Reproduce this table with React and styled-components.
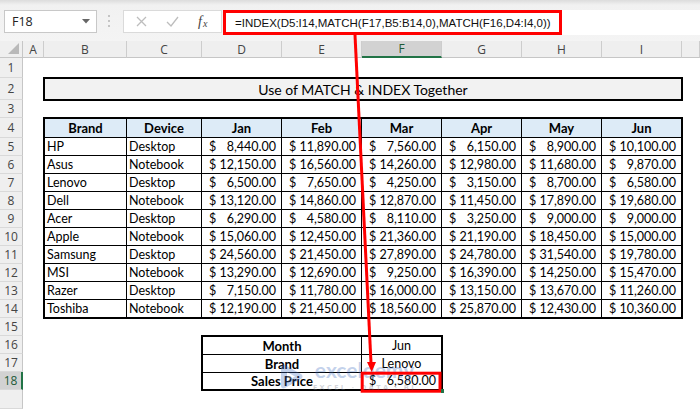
import React from 'react';
import styled, { createGlobalStyle } from 'styled-components';

const GlobalStyle = createGlobalStyle`
  html, body { margin: 0; padding: 0; background: #fff; }
  body { width: 700px; height: 409px; overflow: hidden; font-family: Lato, "Liberation Sans", sans-serif; }
  * { box-sizing: border-box; }
`;

const Screen = styled.div`
  position: relative;
  width: 700px;
  height: 409px;
  display: flex;
  flex-direction: column;
  overflow: hidden;
  background: #fff;
`;

/* ---------- formula bar ---------- */
const FormulaBar = styled.div`
  flex: none;
  height: 41px;
  display: flex;
  align-items: flex-start;
  padding: 10px 0 0 4px;
  background: linear-gradient(#dcdcdc 0, #f1f1f1 5px, #f4f4f4 100%);
`;

const NameBox = styled.div`
  width: 93px;
  height: 23px;
  border: 1px solid #c8c8c8;
  background: #fff;
  display: flex;
  align-items: center;
  justify-content: space-between;
  padding: 0 6px 0 7px;
  font: 12.5px "Open Sans", sans-serif;
  color: #222;
`;

const Grip = styled.div`
  margin: 5px 0 0 11px;
  width: 3px;
  display: flex;
  flex-direction: column;
  gap: 3px;
  span { width: 2px; height: 2px; background: #b4b4b4; border-radius: 1px; }
`;

const FxBox = styled.div`
  margin-left: 12px;
  width: 99px;
  height: 23px;
  background: #fff;
  border: 1px solid #dadada;
  display: flex;
  align-items: center;
  gap: 19px;
  padding-left: 12px;
`;

const FxLabel = styled.span`
  font: italic 14px "Liberation Serif", serif;
  color: #444;
  sub { font-size: 10px; vertical-align: -1px; margin-left: 1px; }
`;

const FormulaArea = styled.div`
  margin-left: 1px;
  flex: 1;
  height: 25px;
  background: #fff;
  display: flex;
`;

const RedFrame = styled.div`
  width: 339px;
  height: 25px;
  border: 3px solid #ff0000;
  display: flex;
  align-items: center;
  padding-left: 9px;
  font: 11.5px "Liberation Sans", Arial, sans-serif;
  color: #111;
  white-space: nowrap;
`;

/* ---------- sheet ---------- */
const Sheet = styled.div`
  flex: 1;
  min-height: 0;
  display: grid;
  grid-template-columns: 23px 21px 83px 75px repeat(6, 80px) 1fr;
  grid-template-rows: 17px 20px 22px 18px 20px repeat(14, 18px) 1fr;
  background: #fff;
`;

const Corner = styled.div`
  grid-row: 1;
  grid-column: 1;
  position: relative;
  background: #efefef;
  border-right: 1px solid #c6c6c6;
  border-bottom: 1px solid #c6c6c6;
  &::after {
    content: "";
    position: absolute;
    right: 3px;
    bottom: 3px;
    border-style: solid;
    border-width: 0 0 11px 11px;
    border-color: transparent transparent #b9b9b9 transparent;
  }
`;

const ColHeader = styled.div`
  grid-row: 1;
  grid-column: ${p => p.$col};
  display: flex;
  align-items: center;
  justify-content: center;
  background: ${p => (p.$active ? '#d2d2d2' : '#efefef')};
  border-right: 1px solid #cdcdcd;
  border-bottom: ${p => (p.$active ? '2px solid #217346' : '1px solid #c6c6c6')};
  font: 12px "Open Sans", sans-serif;
  color: ${p => (p.$active ? '#1d5a37' : '#444')};
`;

const RowHeader = styled.div`
  grid-column: 1;
  grid-row: ${p => p.$row};
  display: flex;
  align-items: center;
  justify-content: center;
  background: ${p => (p.$active ? '#d2d2d2' : '#efefef')};
  border-right: ${p => (p.$active ? '2px solid #217346' : '1px solid #c6c6c6')};
  border-bottom: 1px solid #d9d9d9;
  font: 12px "Open Sans", sans-serif;
  color: ${p => (p.$active ? '#1d5a37' : '#444')};
`;

const TitleBox = styled.div`
  grid-area: 3 / 3 / 4 / 11;
  margin: -1px;
  border: 2px solid #000;
  background: #f2f2f2;
  display: flex;
  align-items: center;
  justify-content: center;
  font: 14px Lato, sans-serif;
  color: #000;
`;

const TableGrid = styled.div`
  grid-area: ${p => p.$area};
  margin: -1px;
  border: 2px solid #000;
  display: grid;
  grid-template-columns: ${p => p.$cols};
  grid-template-rows: ${p => p.$rows};
  gap: 1px;
  background: #000;
`;

const Cell = styled.div`
  background: ${p => (p.$head ? '#ddebf7' : '#fff')};
  font-weight: ${p => (p.$bold ? 700 : 400)};
  display: flex;
  align-items: center;
  justify-content: ${p => (p.$center ? 'center' : 'flex-start')};
  padding: 1px 2px 0;
  font-size: ${p => (p.$bold ? '13px' : '12.5px')};
  line-height: 1;
  color: #000;
  white-space: nowrap;
  overflow: hidden;
`;

const Money = styled(Cell)`
  justify-content: space-between;
  padding: 1px 5px 0 7px;
`;

/* ---------- overlays ---------- */
const Overlay = styled.svg`
  position: absolute;
  left: 0;
  top: 0;
  pointer-events: none;
`;

const Watermark = styled.div`
  position: absolute;
  left: 278px;
  top: 360px;
  display: flex;
  align-items: center;
  gap: 8px;
  opacity: 0.3;
  pointer-events: none;
`;

const WmText = styled.div`
  display: flex;
  flex-direction: column;
  align-items: center;
`;

const WmName = styled.span`
  font: 700 21px Lato, sans-serif;
  line-height: 20px;
  color: #3d6cc0;
`;

const WmSub = styled.span`
  font: 700 7.5px "Open Sans", sans-serif;
  letter-spacing: 2.4px;
  color: #6c7384;
  margin-top: 2px;
`;

const months = ['Jan', 'Feb', 'Mar', 'Apr', 'May', 'Jun'];
const data = [
  ['HP', 'Desktop', ['8,440.00', '11,890.00', '7,560.00', '6,150.00', '8,900.00', '10,100.00']],
  ['Asus', 'Notebook', ['12,150.00', '16,560.00', '14,260.00', '12,980.00', '11,680.00', '9,870.00']],
  ['Lenovo', 'Desktop', ['6,500.00', '7,650.00', '4,250.00', '3,150.00', '8,700.00', '6,580.00']],
  ['Dell', 'Notebook', ['13,120.00', '14,860.00', '12,870.00', '11,450.00', '17,890.00', '19,680.00']],
  ['Acer', 'Desktop', ['6,290.00', '4,580.00', '8,110.00', '3,250.00', '9,000.00', '9,000.00']],
  ['Apple', 'Notebook', ['15,060.00', '12,450.00', '21,360.00', '21,190.00', '18,450.00', '15,000.00']],
  ['Samsung', 'Desktop', ['24,560.00', '21,450.00', '27,890.00', '24,780.00', '31,540.00', '19,780.00']],
  ['MSI', 'Notebook', ['13,290.00', '12,690.00', '9,250.00', '16,390.00', '14,250.00', '15,470.00']],
  ['Razer', 'Desktop', ['7,150.00', '11,780.00', '16,000.00', '13,150.00', '13,670.00', '11,260.00']],
  ['Toshiba', 'Notebook', ['12,190.00', '21,450.00', '18,560.00', '25,870.00', '12,430.00', '10,360.00']],
];

const cols = ['A', 'B', 'C', 'D', 'E', 'F', 'G', 'H', 'I', ''];

function MoneyValue({ v }) {
  return (
    <Money>
      <span>$</span>
      <span>{v}</span>
    </Money>
  );
}

export default function App() {
  return (
    <Screen>
      <GlobalStyle />
      <FormulaBar>
        <NameBox>
          <span>F18</span>
          <svg width="8" height="5" viewBox="0 0 8 5"><path d="M0 0h8L4 4.5z" fill="#666" /></svg>
        </NameBox>
        <Grip><span /><span /><span /></Grip>
        <FxBox>
          <svg width="11" height="11" viewBox="0 0 11 11">
            <path d="M1 1l9 9M10 1l-9 9" stroke="#bdbdbd" strokeWidth="1.3" fill="none" />
          </svg>
          <svg width="13" height="11" viewBox="0 0 13 11">
            <path d="M1 6l4 4 7-9" stroke="#bdbdbd" strokeWidth="1.3" fill="none" />
          </svg>
          <FxLabel>f<sub>x</sub></FxLabel>
        </FxBox>
        <FormulaArea>
          <RedFrame>=INDEX(D5:I14,MATCH(F17,B5:B14,0),MATCH(F16,D4:I4,0))</RedFrame>
        </FormulaArea>
      </FormulaBar>

      <Sheet>
        <Corner />
        {cols.map((c, i) => (
          <ColHeader key={i} $col={i + 2} $active={c === 'F'}>{c}</ColHeader>
        ))}
        {Array.from({ length: 19 }, (_, i) => (
          <RowHeader key={i} $row={i + 2} $active={i + 1 === 18}>{i < 18 ? i + 1 : ''}</RowHeader>
        ))}

        <TitleBox>Use of MATCH &amp; INDEX Together</TitleBox>

        <TableGrid
          $area="5 / 3 / 16 / 11"
          $cols="81px 74px repeat(5, 79px) 1fr"
          $rows="18px repeat(9, 17px) 1fr"
        >
          <Cell $head $bold $center>Brand</Cell>
          <Cell $head $bold $center>Device</Cell>
          {months.map(m => (
            <Cell key={m} $head $bold $center>{m}</Cell>
          ))}
          {data.map(([brand, device, vals]) => (
            <React.Fragment key={brand}>
              <Cell>{brand}</Cell>
              <Cell>{device}</Cell>
              {vals.map((v, j) => <MoneyValue key={j} v={v} />)}
            </React.Fragment>
          ))}
        </TableGrid>

        <TableGrid $area="17 / 5 / 20 / 8" $cols="158px 1fr" $rows="17px 17px 1fr">
          <Cell $bold $center>Month</Cell>
          <Cell $center>Jun</Cell>
          <Cell $bold $center>Brand</Cell>
          <Cell $center>Lenovo</Cell>
          <Cell $bold $center>Sales Price</Cell>
          <MoneyValue v="6,580.00" />
        </TableGrid>
      </Sheet>

      <Watermark>
        <svg width="27" height="27" viewBox="0 0 27 27">
          <path d="M3 4c0-2 2-3 4-2l16 9c2 1 2 4 0 5L7 25c-2 1-4 0-4-2z" fill="#3d6cc0" />
          <path d="M9 9l8 4.5-8 4.5z" fill="#fff" />
        </svg>
        <WmText>
          <WmName>exceldemy</WmName>
          <WmSub>EXCEL · DATA · BI</WmSub>
        </WmText>
      </Watermark>

      <Overlay width="700" height="409" viewBox="0 0 700 409">
        <line x1="355" y1="35" x2="371" y2="363" stroke="#ff0000" strokeWidth="3" />
        <polygon points="367,362 376,362 371.7,372" fill="#ff0000" />
        <rect x="362.2" y="373.2" width="77.8" height="18" fill="none" stroke="#ff0000" strokeWidth="3" />
        <rect x="441" y="389" width="3" height="4" fill="#217346" />
      </Overlay>
    </Screen>
  );
}
